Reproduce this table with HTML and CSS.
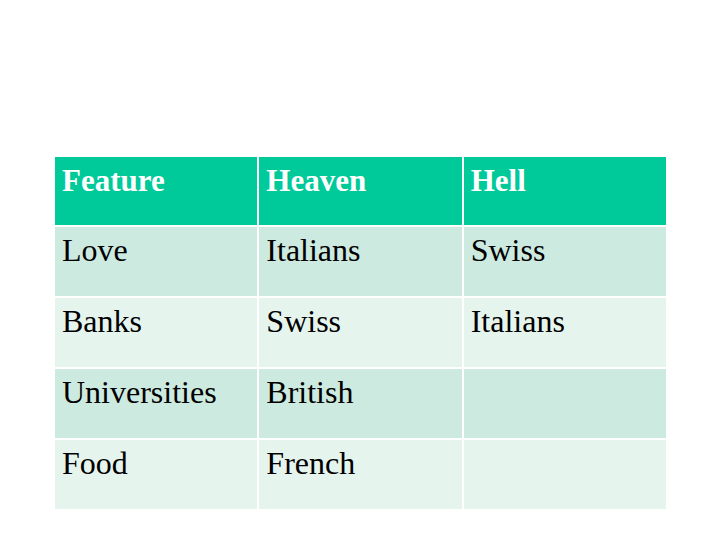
FILE: index.html
```html
<!DOCTYPE html>
<html>
<head>
<meta charset="utf-8">
<link rel="stylesheet" href="styles.css">
</head>
<body>
<div class="page">
  <div class="table">
    <div class="cell head">Feature</div>
    <div class="cell head">Heaven</div>
    <div class="cell head">Hell</div>
    <div class="cell odd">Love</div>
    <div class="cell odd">Italians</div>
    <div class="cell odd">Swiss</div>
    <div class="cell even">Banks</div>
    <div class="cell even">Swiss</div>
    <div class="cell even">Italians</div>
    <div class="cell odd">Universities</div>
    <div class="cell odd">British</div>
    <div class="cell odd"></div>
    <div class="cell even">Food</div>
    <div class="cell even">French</div>
    <div class="cell even"></div>
  </div>
</div>
</body>
</html>
```
FILE: styles.css
```css
html, body {
  margin: 0;
  padding: 0;
  background: #ffffff;
}
.page {
  width: 720px;
  height: 540px;
  box-sizing: border-box;
  padding: 157px 0 0 55px;
}
.table {
  width: 611px;
  display: grid;
  grid-template-columns: 1fr 1fr 1fr;
  grid-template-rows: 68px 69px 69px 69px 69px;
  gap: 2px;
  background: #ffffff;
}
.cell {
  font-family: "Liberation Serif", "Times New Roman", serif;
  font-size: 32px;
  line-height: 36px;
  color: #000000;
  padding: 5px 0 0 7px;
  box-sizing: border-box;
}
.head {
  background: #00c99a;
  color: #ffffff;
  font-weight: bold;
  font-size: 31px;
  padding-top: 6px;
}
.odd {
  background: #cceadf;
}
.even {
  background: #e6f4ee;
}
```
